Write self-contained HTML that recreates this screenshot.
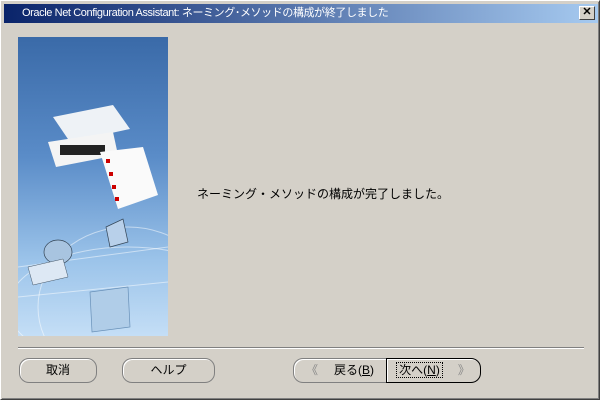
<!DOCTYPE html>
<html><head><meta charset="utf-8"><style>
*{margin:0;padding:0;box-sizing:border-box}
body{width:600px;height:400px;background:#d4d0c8;font-family:"Liberation Sans","Noto Sans CJK JP",sans-serif;font-size:12px;position:relative;overflow:hidden}
.win{position:absolute;left:0;top:0;width:600px;height:400px;border:1px solid;border-color:#fff #404040 #404040 #fff;box-shadow:inset 1px 1px 0 #d4d0c8,inset -1px -1px 0 #808080}
.title{position:absolute;left:3px;top:3px;width:594px;height:19px;background:linear-gradient(to right,#0a246a,#a6caf0);color:#fff;font-size:11px;line-height:19px;padding-left:18px;letter-spacing:-0.4px}
.x{position:absolute;right:3px;top:2px;width:16px;height:14px;background:#d4d0c8;border:1px solid;border-color:#fff #404040 #404040 #fff;color:#000;font-size:11px;line-height:11px;text-align:center;font-weight:bold;letter-spacing:0}
.img{position:absolute;left:17px;top:36px;width:150px;height:299px;background:linear-gradient(to bottom,#3a6aa8 0%,#5a8cc8 40%,#9cc4ea 75%,#c4def6 100%)}
.msg{position:absolute;left:196px;top:184px;font-size:12px}
.sep{position:absolute;left:17px;top:346px;width:566px;height:2px;border-top:1px solid #808080;border-bottom:1px solid #fff}
.btn{position:absolute;top:357px;height:25px;border:1px solid #808080;border-radius:10px;background:#d4d0c8;box-shadow:inset 1px 1px 0 #fff;text-align:center;line-height:23px;font-size:12px}
</style></head><body>
<div class="win">
<div class="title">Oracle Net Configuration Assistant: ネーミング･メソッドの構成が終了しました<div class="x">✕</div></div>
<div class="img">
<svg width="150" height="299">
<polygon points="35,80 95,68 112,92 52,105" fill="#eef2f6"/>
<polygon points="30,105 95,95 100,118 38,130" fill="#f4f4f4"/>
<g fill="#222"><rect x="42" y="108" width="45" height="10"/></g>
<polygon points="82,115 125,110 140,158 100,172" fill="#fafafa"/>
<g fill="#c00"><rect x="88" y="122" width="4" height="4"/><rect x="91" y="135" width="4" height="4"/><rect x="94" y="148" width="4" height="4"/><rect x="97" y="160" width="4" height="4"/></g>
<g stroke="#fff" stroke-opacity=".5" fill="none"><ellipse cx="110" cy="270" rx="120" ry="60"/><ellipse cx="110" cy="270" rx="90" ry="80"/><line x1="0" y1="230" x2="150" y2="210"/><line x1="0" y1="260" x2="150" y2="245"/></g>
<ellipse cx="40" cy="215" rx="14" ry="12" fill="#a8c4e0" stroke="#345" stroke-width=".7"/>
<polygon points="10,230 45,222 50,240 15,248" fill="#dde8f4" stroke="#456" stroke-width=".5"/>
<polygon points="88,190 105,182 110,205 92,210" fill="#b8d0ea" stroke="#345" stroke-width=".7"/>
<polygon points="72,255 110,250 112,290 74,295" fill="#b0cde8" stroke="#6890b8" stroke-width=".7"/>
</svg>
</div>
<div class="msg">ネーミング・メソッドの構成が完了しました。</div>
<div class="sep"></div>
<div class="btn" style="left:18px;width:78px">取消</div>
<div class="btn" style="left:121px;width:93px">ヘルプ</div>
<div class="btn" style="left:292px;width:94px;border-radius:10px 0 0 10px"><span style="color:#888;margin-right:16px">《</span>戻る(<u>B</u>)</div>
<div class="btn" style="left:385px;width:95px;border:1px solid #000;border-radius:0 10px 10px 0"><span style="outline:1px dotted #000;padding:0 2px">次へ(<u>N</u>)</span><span style="color:#888;margin-left:16px">》</span></div>
</div>
</body></html>
